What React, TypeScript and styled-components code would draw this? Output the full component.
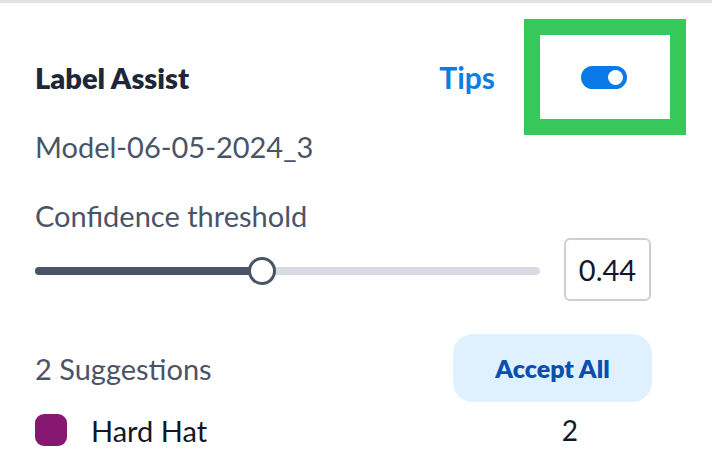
import React, { FC } from 'react';
import styled, { createGlobalStyle } from 'styled-components';

const GlobalStyle = createGlobalStyle`
  html, body {
    margin: 0;
    padding: 0;
    background: #ffffff;
  }
  body {
    font-family: Lato, "Open Sans", sans-serif;
  }
`;

const threshold = 0.44;

const suggestions: { name: string; color: string; count: number }[] = [
  { name: 'Hard Hat', color: '#861872', count: 2 },
];

const App: FC = () => {
  return (
    <>
      <GlobalStyle />
      <Panel>
        <Header>
          <Title>Label Assist</Title>
          <TipsLink href="#">Tips</TipsLink>
          <ToggleWrap>
            <Toggle role="switch" aria-checked={true}>
              <Knob />
            </Toggle>
            <Highlight />
          </ToggleWrap>
        </Header>
        <ModelName>Model-06-05-2024_3</ModelName>
        <FieldLabel>Confidence threshold</FieldLabel>
        <SliderRow>
          <Track>
            <Fill style={{ width: `${threshold * 100}%` }} />
            <Thumb style={{ left: `${threshold * 100}%` }} />
          </Track>
          <ValueBox>{threshold.toFixed(2)}</ValueBox>
        </SliderRow>
        <SuggestionsRow>
          <Muted>
            {suggestions.reduce((n, s) => n + s.count, 0)} Suggestions
          </Muted>
          <AcceptButton>Accept All</AcceptButton>
        </SuggestionsRow>
        {suggestions.map((s) => (
          <ClassRow key={s.name}>
            <Swatch $color={s.color} />
            <ClassName>{s.name}</ClassName>
            <Count>{s.count}</Count>
          </ClassRow>
        ))}
      </Panel>
    </>
  );
};

export default App;

const Panel = styled.div`
  border-top: 3px solid #e3e3e3;
  padding: 42px 60px 0 35px;
  height: 470px;
  box-sizing: border-box;
  overflow: hidden;
`;

const Header = styled.div`
  display: flex;
  align-items: center;
  height: 64px;
`;

const Title = styled.div`
  flex: 1;
  font-size: 29px;
  font-weight: 800;
  color: #1e2738;
`;

const TipsLink = styled.a`
  font-size: 30px;
  font-weight: 700;
  color: #0b7de6;
  text-decoration: none;
`;

const ToggleWrap = styled.div`
  position: relative;
  margin-left: 86px;
  margin-right: 25px;
  display: flex;
`;

const Toggle = styled.div`
  width: 46px;
  height: 23px;
  border-radius: 12px;
  background: #0a7be6;
  position: relative;
`;

const Knob = styled.span`
  position: absolute;
  right: 4px;
  top: 4px;
  width: 15px;
  height: 15px;
  border-radius: 50%;
  background: #ffffff;
`;

const Highlight = styled.div`
  position: absolute;
  left: -57px;
  top: -47px;
  width: 130px;
  height: 84px;
  border: 16px solid #36c85a;
  pointer-events: none;
`;

const ModelName = styled.div`
  margin-top: 22px;
  font-size: 29px;
  line-height: 32px;
  color: #4a5468;
`;

const FieldLabel = styled.div`
  margin-top: 37px;
  font-size: 29px;
  line-height: 32px;
  color: #4a5468;
`;

const SliderRow = styled.div`
  display: flex;
  align-items: center;
  margin-top: 6px;
  height: 63px;
`;

const Track = styled.div`
  position: relative;
  width: 505px;
  height: 8px;
  border-radius: 4px;
  background: #d8dbe2;
  margin-top: 3px;
`;

const Fill = styled.div`
  height: 100%;
  border-radius: 4px;
  background: #4a5466;
`;

const Thumb = styled.div`
  position: absolute;
  top: 50%;
  width: 28px;
  height: 28px;
  box-sizing: border-box;
  border: 3px solid #4a5466;
  border-radius: 50%;
  background: #ffffff;
  transform: translate(-50%, -50%);
  margin-left: 5px;
`;

const ValueBox = styled.div`
  margin-left: 24px;
  width: 87px;
  height: 63px;
  box-sizing: border-box;
  border: 2px solid #cfcfcf;
  border-radius: 6px;
  display: flex;
  align-items: center;
  justify-content: center;
  font-size: 29px;
  color: #111827;
`;

const SuggestionsRow = styled.div`
  display: flex;
  align-items: center;
  justify-content: space-between;
  margin-top: 33px;
`;

const Muted = styled.div`
  font-size: 29px;
  color: #4a5468;
`;

const AcceptButton = styled.button`
  width: 199px;
  height: 68px;
  border: none;
  border-radius: 20px;
  background: #dff1fe;
  color: #0b4fae;
  font-family: inherit;
  font-size: 25px;
  font-weight: 800;
  cursor: pointer;
`;

const ClassRow = styled.div`
  display: flex;
  align-items: center;
  margin-top: 12px;
  height: 32px;
`;

const Swatch = styled.span<{ $color: string }>`
  width: 32px;
  height: 32px;
  border-radius: 9px;
  background: ${(p) => p.$color};
`;

const ClassName = styled.span`
  margin-left: 24px;
  font-size: 29px;
  color: #111827;
`;

const Count = styled.span`
  margin-left: auto;
  margin-right: 74px;
  font-size: 28px;
  color: #111827;
`;
